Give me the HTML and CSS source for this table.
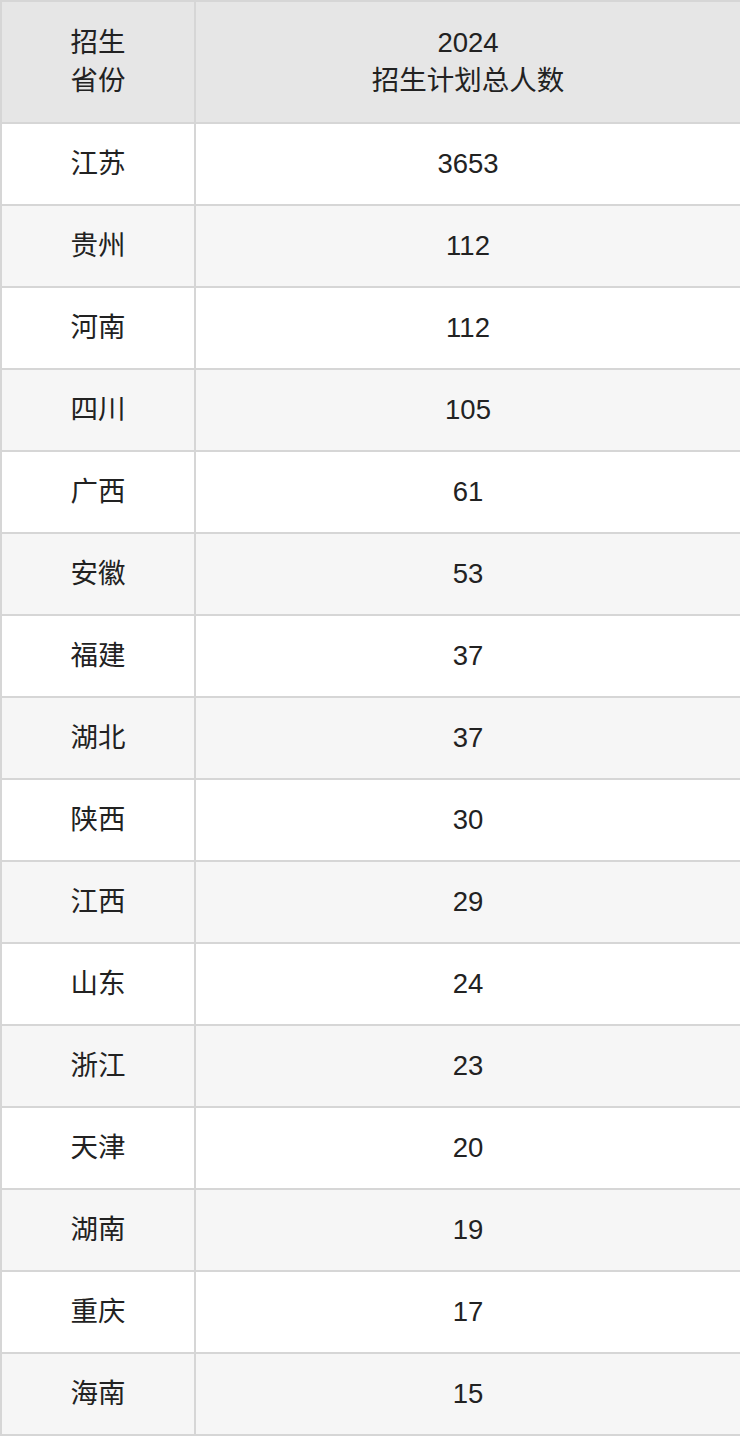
FILE: index.html
```html
<!DOCTYPE html>
<html lang="zh-CN">
<head>
<meta charset="utf-8">
<link rel="stylesheet" href="styles.css">
</head>
<body>
<table class="plan">
  <colgroup><col class="c1"><col class="c2"></colgroup>
  <thead>
    <tr><th>招生<br>省份</th><th>2024<br>招生计划总人数</th></tr>
  </thead>
  <tbody>
    <tr><td>江苏</td><td>3653</td></tr>
    <tr><td>贵州</td><td>112</td></tr>
    <tr><td>河南</td><td>112</td></tr>
    <tr><td>四川</td><td>105</td></tr>
    <tr><td>广西</td><td>61</td></tr>
    <tr><td>安徽</td><td>53</td></tr>
    <tr><td>福建</td><td>37</td></tr>
    <tr><td>湖北</td><td>37</td></tr>
    <tr><td>陕西</td><td>30</td></tr>
    <tr><td>江西</td><td>29</td></tr>
    <tr><td>山东</td><td>24</td></tr>
    <tr><td>浙江</td><td>23</td></tr>
    <tr><td>天津</td><td>20</td></tr>
    <tr><td>湖南</td><td>19</td></tr>
    <tr><td>重庆</td><td>17</td></tr>
    <tr><td>海南</td><td>15</td></tr>
  </tbody>
</table>
</body>
</html>
```

FILE: styles.css
```css
html, body {
  margin: 0;
  padding: 0;
  background: #ffffff;
}
.plan {
  width: 740px;
  table-layout: fixed;
  border-collapse: collapse;
  font-family: "Liberation Sans", "Noto Sans CJK SC", sans-serif;
  font-size: 27.5px;
  color: #222222;
}
.plan .c1 { width: 194px; }
.plan .c2 { width: 546px; }
.plan th, .plan td {
  border: 2px solid #d6d6d6;
  text-align: center;
  vertical-align: middle;
  padding: 0;
  font-weight: normal;
}
.plan th {
  background: #e6e6e6;
  height: 120px;
  line-height: 38px;
}
.plan td {
  height: 80px;
  line-height: 38px;
}
.plan tbody tr:nth-child(even) td {
  background: #f6f6f6;
}
```
